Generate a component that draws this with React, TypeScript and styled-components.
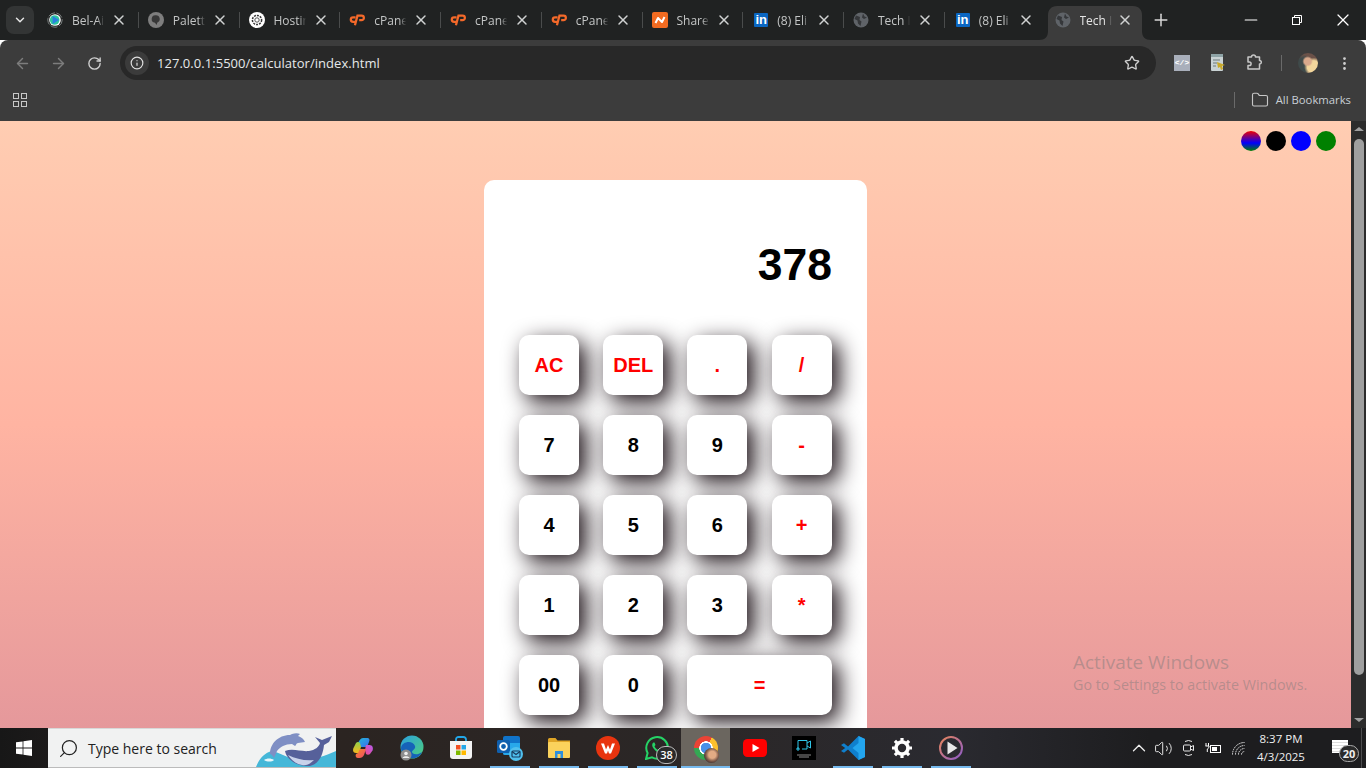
import styled, { createGlobalStyle } from "styled-components";
import {
  ArrowLeft,
  ArrowRight,
  ChevronDown,
  ChevronUp,
  EllipsisVertical,
  Folder,
  Info,
  Minus,
  Plus,
  RotateCw,
  Search,
  Star,
  Volume2,
  X,
} from "lucide-react";
import type { ReactNode } from "react";

const GlobalStyle = createGlobalStyle`
  html, body {
    margin: 0;
    height: 100%;
    overflow: hidden;
  }
  * { box-sizing: border-box; }
  #root { height: 100%; }
`;

const uiFont = `"Open Sans", "Noto Sans", sans-serif`;

function CpanelIcon() {
  return (
    <svg width="17" height="12" viewBox="0 0 17 12" fill="none" stroke="#f4692a" strokeWidth="2.4">
      <path d="M7 3.200H4.300a2.400 2.400 0 0 0 0 4.800H6.500" />
      <path d="M6.300 11.500 9 1.400h4.400a2.400 2.400 0 0 1 0 4.800h-2.600" />
    </svg>
  );
}

function LinkedinIcon() {
  return (
    <LinkedinBox>
      <span>in</span>
    </LinkedinBox>
  );
}

function GlobeIcon() {
  return (
    <svg width="16" height="16" viewBox="0 0 16 16">
      <circle cx="8" cy="8" r="7.500" fill="#5f6368" />
      <path d="M3 3.500 7 5 6.500 8 8.500 9.500 7.500 14 5 11.500 4.500 8.500 1.500 7ZM10 1.500l1.500 3L14 5.500 11 7 9 5.500Z" fill="#35373a" />
    </svg>
  );
}

function BelIcon() {
  return (
    <svg width="20" height="20" viewBox="0 0 20 20">
      <circle cx="10" cy="10" r="9" fill="none" stroke="#8f9595" strokeWidth="1" strokeDasharray="9 2" />
      <circle cx="10" cy="10" r="7.300" fill="#fff" />
      <circle cx="9.600" cy="10" r="6" fill="#2cc6a0" />
      <path d="M7 5 15 10l-8 5Z" fill="#2a7de1" />
    </svg>
  );
}

function PaletteIcon() {
  return (
    <svg width="16" height="16" viewBox="0 0 16 16">
      <circle cx="8" cy="8" r="8" fill="#7e7e7e" />
      <path d="M8 3.200a3.800 3.800 0 0 1 1.400 7.300L8.600 13 7 10.800A3.800 3.800 0 0 1 8 3.200Z" fill="#383838" />
    </svg>
  );
}

function HostingIcon() {
  return (
    <svg width="16" height="16" viewBox="0 0 16 16">
      <circle cx="8" cy="8" r="8" fill="#fff" />
      <circle cx="8" cy="8" r="4.600" fill="none" stroke="#333" strokeWidth="1.500" strokeDasharray="2 1" />
      <circle cx="8" cy="8" r="2.200" fill="none" stroke="#555" strokeWidth="1" />
    </svg>
  );
}

function ShareIcon() {
  return (
    <svg width="16" height="16" viewBox="0 0 16 16">
      <rect width="16" height="16" rx="2" fill="#f26b21" />
      <path d="M3.500 11 6 6l4 4 2.500-5" fill="none" stroke="#fff" strokeWidth="2" strokeLinejoin="round" />
    </svg>
  );
}

const tabs: { title: string; icon: ReactNode; active?: boolean; noDivider?: boolean }[] = [
  { title: "Bel-Ai", icon: <BelIcon /> },
  { title: "Palett", icon: <PaletteIcon /> },
  { title: "Hostin", icon: <HostingIcon /> },
  { title: "cPane", icon: <CpanelIcon /> },
  { title: "cPane", icon: <CpanelIcon /> },
  { title: "cPane", icon: <CpanelIcon /> },
  { title: "Share", icon: <ShareIcon /> },
  { title: "(8) Eli", icon: <LinkedinIcon /> },
  { title: "Tech I", icon: <GlobeIcon /> },
  { title: "(8) Eli", icon: <LinkedinIcon />, noDivider: true },
  { title: "Tech I", icon: <GlobeIcon />, active: true, noDivider: true },
];

const calcKeys: { label: string; accent?: boolean; wide?: boolean }[] = [
  { label: "AC", accent: true },
  { label: "DEL", accent: true },
  { label: ".", accent: true },
  { label: "/", accent: true },
  { label: "7" },
  { label: "8" },
  { label: "9" },
  { label: "-", accent: true },
  { label: "4" },
  { label: "5" },
  { label: "6" },
  { label: "+", accent: true },
  { label: "1" },
  { label: "2" },
  { label: "3" },
  { label: "*", accent: true },
  { label: "00" },
  { label: "0" },
  { label: "=", accent: true, wide: true },
];

const themeDots = [
  "linear-gradient(180deg, #f00000, #0000ff 60%, #008000)",
  "#000",
  "#0000ff",
  "#008000",
];

function WinLogo() {
  return (
    <svg width="16" height="16" viewBox="0 0 16 16" fill="#fff">
      <path d="M0 2.300 6.600 1.400v6.200H0ZM7.400 1.300 16 0v7.600H7.400ZM0 8.400h6.600v6.200L0 13.700ZM7.400 8.400H16V16l-8.600-1.300Z" />
    </svg>
  );
}

function SearchArt() {
  return (
    <svg width="80" height="38" viewBox="0 0 80 38">
      <path d="M0 38c3-8 8-14 16-16 8 2 14 6 22 8 14 3 28-2 42-8v16Z" fill="#45b7d8" />
      <path d="M14 25c0-10 8-19 20-19l2-1c3-1 6-1 8 0l-2 2c3 1 6 3 7 6l-7 1c-2 0-2 3-3 3l-3-2c-7 0-12 3-15 7l-3 7c-1-2-3-4-4-4Z" fill="#7f8fc4" />
      <path d="M29 22c8-3 16 1 24 0 6-1 10-4 11-8l-5-6 7 3 10-4-3 6-5 3c-1 10-5 19-14 21-11 1-23-5-25-15Z" fill="#56609a" />
      <path d="M32 26c8 4 17 6 26 5-4 4-8 6-12 5-6-1-11-5-14-10Z" fill="#c9d2ea" />
      <path d="M8 31c3-2 7-2 10 0-2 2-7 2-10 0Z" fill="#e8f6fa" />
    </svg>
  );
}

function CopilotIcon() {
  return (
    <svg width="22" height="22" viewBox="0 0 22 22">
      <defs>
        <linearGradient id="cpA" x1="0" y1="0" x2="1" y2="1">
          <stop offset="0" stopColor="#22b8d8" />
          <stop offset="1" stopColor="#3a6cf0" />
        </linearGradient>
        <linearGradient id="cpB" x1="1" y1="0" x2="0" y2="1">
          <stop offset="0" stopColor="#b45cf0" />
          <stop offset="1" stopColor="#f0488a" />
        </linearGradient>
        <linearGradient id="cpC" x1="0" y1="0" x2="0" y2="1">
          <stop offset="0" stopColor="#8fd04a" />
          <stop offset="1" stopColor="#f5b81e" />
        </linearGradient>
        <linearGradient id="cpD" x1="0" y1="0" x2="1" y2="1">
          <stop offset="0" stopColor="#f58a2a" />
          <stop offset="1" stopColor="#f0486a" />
        </linearGradient>
      </defs>
      <path d="M6 6.500C7 3 9 1 11.500 1H15c2.500 0 3 2 2 4l-2 5H8Z" fill="url(#cpA)" />
      <path d="M1.500 11 4 6c1-1.500 3-1.500 4 0l1 4-2 6H4c-3 0-3.500-3-2.500-5Z" fill="url(#cpC)" />
      <path d="M14 8h3.500c3 0 4 3 3 5.500L18 17c-1 1-3 1-4 0l-1-4Z" fill="url(#cpB)" />
      <path d="M8 12h6l-2 6c-1 2-2.500 3-4.500 3H6c-2 0-3-2-2-4l2-1Z" fill="url(#cpD)" />
    </svg>
  );
}

function EdgeIcon() {
  return (
    <svg width="26" height="26" viewBox="0 0 26 26">
      <defs>
        <linearGradient id="edgeG" x1="0" y1="0" x2="1" y2="1">
          <stop offset="0" stopColor="#2a9fe0" />
          <stop offset="1" stopColor="#4fd07a" />
        </linearGradient>
      </defs>
      <circle cx="13" cy="12" r="11.500" fill="url(#edgeG)" />
      <path d="M2 13c1-7 12-8 14-2 1 3-3 4-3 6s5 4 10 0c-2 5-7 7-11 6-5-1-10-5-10-10Z" fill="#1662b8" />
      <circle cx="7" cy="20" r="5.500" fill="#8d8d8d" />
      <circle cx="7" cy="18.500" r="1.800" fill="#eee" />
      <path d="M3.500 23c.5-2.500 6.500-2.500 7 0Z" fill="#eee" />
    </svg>
  );
}

function StoreIcon() {
  return (
    <svg width="24" height="24" viewBox="0 0 24 24">
      <path d="M7 6V3.500A2.500 2.500 0 0 1 9.500 1h5A2.500 2.500 0 0 1 17 3.500V6" fill="none" stroke="#22a7e8" strokeWidth="1.800" />
      <path d="M1 5h22v15a3 3 0 0 1-3 3H4a3 3 0 0 1-3-3Z" fill="#f4f4f4" />
      <rect x="7" y="9" width="4.500" height="4.500" fill="#f25022" />
      <rect x="12.500" y="9" width="4.500" height="4.500" fill="#22a7e8" />
      <rect x="7" y="14.500" width="4.500" height="4.500" fill="#7fba00" />
      <rect x="12.500" y="14.500" width="4.500" height="4.500" fill="#ffb900" />
    </svg>
  );
}

function OutlookIcon() {
  return (
    <svg width="26" height="26" viewBox="0 0 26 26">
      <rect x="6" y="1" width="17" height="19" rx="2" fill="#1073c9" />
      <path d="M6 8h17v12H8a2 2 0 0 1-2-2Z" fill="#28a8ea" />
      <rect x="0" y="5" width="13" height="13" rx="1.500" fill="#0f5fae" />
      <circle cx="6.500" cy="11.500" r="3.300" fill="none" stroke="#fff" strokeWidth="1.800" />
      <circle cx="19" cy="19" r="7" fill="#50c0ee" />
      <rect x="15" y="16" width="8" height="6" rx="1" fill="none" stroke="#173a5e" strokeWidth="1.200" />
      <path d="m15 16.500 4 3 4-3" fill="none" stroke="#173a5e" strokeWidth="1.200" />
    </svg>
  );
}

function ExplorerIcon() {
  return (
    <svg width="22" height="20" viewBox="0 0 22 20">
      <path d="M0 1.500A1.500 1.500 0 0 1 1.500 0h6l2 2.500H22V17H0Z" fill="#e0a526" />
      <rect x="0" y="4" width="22" height="16" rx="1" fill="#fbd25c" />
      <rect x="7" y="13" width="8" height="7" fill="#2e8fdc" />
      <rect x="9.500" y="16" width="3" height="4" fill="#fbd25c" />
    </svg>
  );
}

function WpsIcon() {
  return (
    <svg width="24" height="24" viewBox="0 0 24 24">
      <circle cx="12" cy="12" r="12" fill="#e8340f" />
      <path d="M5 7.500h3l2 6 2-4.500 2 4.500 2-6h3l-4 10h-2l-1-3-1 3H9Z" fill="#fff" />
    </svg>
  );
}

function WhatsappIcon() {
  return (
    <svg width="24" height="24" viewBox="0 0 24 24">
      <path d="M1 23l1.600-6A10.800 10.800 0 1 1 7 21.400Z" fill="none" stroke="#25d366" strokeWidth="2" />
      <path d="M8.500 6.500c-2 1.500-1.500 4 .5 6.500s5 4.500 7 3.500c1.500-.5 1.500-2 1-2.500l-2.500-1.200-1.200 1.200c-2-.8-3-2-3.800-3.800l1-1.200-1-2.500Z" fill="#25d366" />
    </svg>
  );
}

function YoutubeIcon() {
  return (
    <svg width="24" height="18" viewBox="0 0 24 18">
      <rect width="24" height="18" rx="4.500" fill="#f00" />
      <path d="M9.500 5v8l7-4Z" fill="#fff" />
    </svg>
  );
}

function RecorderIcon() {
  return (
    <svg width="24" height="24" viewBox="0 0 24 24">
      <rect width="24" height="24" fill="#000" />
      <path d="M6 13V4.500h9V13h-5M15 7l3.500-2v7l-3.500-2M4 13h4M6 11v4" fill="none" stroke="#2fc5e8" strokeWidth="1" />
      <path d="M5 19h14M7 21h10" stroke="#8a8a8a" strokeWidth="1" />
    </svg>
  );
}

function VscodeIcon() {
  return (
    <svg width="24" height="24" viewBox="0 0 24 24">
      <path d="M17.500 0 24 3v18l-6.500 3L7 13.500l-4 3.200L0 15l4.200-3L0 9l3-1.700 4 3.200Z" fill="#0f7fcd" />
      <path d="M17.500 0 24 3v18l-6.500 3V17l-6-5 6-5Z" fill="#23a5ee" />
    </svg>
  );
}

function GearIcon() {
  return (
    <svg width="20" height="20" viewBox="0 0 20 20">
      <circle cx="10" cy="10" r="6" fill="none" stroke="#fff" strokeWidth="3.600" />
      <path
        d="M10 0v4M10 16v4M0 10h4M16 10h4M2.900 2.900l2.800 2.800M14.300 14.300l2.800 2.800M2.900 17.100l2.800-2.800M14.300 5.700l2.800-2.800"
        stroke="#fff"
        strokeWidth="3.200"
      />
    </svg>
  );
}

function PlayerIcon() {
  return (
    <svg width="24" height="24" viewBox="0 0 24 24">
      <defs>
        <linearGradient id="playG" x1="0" y1="0" x2="1" y2="1">
          <stop offset="0" stopColor="#e8855a" />
          <stop offset="1" stopColor="#8c5bc9" />
        </linearGradient>
      </defs>
      <circle cx="12" cy="12" r="11" fill="none" stroke="url(#playG)" strokeWidth="2" />
      <path d="M8.500 5.500v13l10-6.500Z" fill="#e8e8e8" />
    </svg>
  );
}

function Restore() {
  return (
    <svg width="10" height="10" viewBox="0 0 10 10" fill="none" stroke="#fff">
      <rect x=".5" y="2.500" width="7" height="7" />
      <path d="M2.500 2.500v-2h7v7h-2" />
    </svg>
  );
}

function ExtensionCode() {
  return <CodeBadge>&lt;/&gt;</CodeBadge>;
}

function ExtensionNote() {
  return (
    <svg width="16" height="18" viewBox="0 0 16 18">
      <rect x="1" y="0" width="12" height="17" rx="1" fill="#c9d2d4" />
      <rect x="1" y="0" width="12" height="3" fill="#8ea3a6" />
      <path d="M3 6h7M3 9h4M3 12h3" stroke="#6d7b7d" />
      <path d="M7 8l8 3-3 1 1 3-2 1-1-3-2 1Z" fill="#c9a92a" />
    </svg>
  );
}

function PuzzleIcon() {
  return (
    <svg width="18" height="18" viewBox="0 0 18 18" fill="none" stroke="#c7c7c7" strokeWidth="1.500">
      <path d="M1.500 4H5a2 2 0 0 1 4 0h4v3.400a1.800 1.800 0 0 1 0 3.600V16H1.500v-3.500h1.300a1.800 1.800 0 0 0 0-3.600H1.500Z" transform="translate(1.500 -1)" strokeLinejoin="round" />
    </svg>
  );
}

function CameraTray() {
  return (
    <svg width="14" height="16" viewBox="0 0 14 16" fill="none" stroke="#e8e8e8">
      <path d="M3 1.500a7 7 0 0 1 7 0M3 14.500a7 7 0 0 0 7 0" />
      <rect x="1.500" y="5" width="7" height="6" rx="1" />
      <path d="m8.500 7 3-1.500v5l-3-1.500" />
    </svg>
  );
}

function BatteryTray() {
  return (
    <svg width="17" height="12" viewBox="0 0 17 12" fill="none" stroke="#fff">
      <rect x="5.500" y="3.500" width="10" height="7" />
      <rect x="7" y="5" width="5" height="4" fill="#fff" stroke="none" />
      <path d="M1 1v3M3.500 1v3M.5 4h3.500v1.500L2.300 7v3" />
    </svg>
  );
}

function WifiTray() {
  return (
    <svg width="14" height="13" viewBox="0 0 14 13" fill="none" stroke="#e8e8e8" strokeDasharray="1.500 .7">
      <path d="M.5 12.500A12 12 0 0 1 12.500.5M3.500 12.500a9 9 0 0 1 9-9M6.500 12.500a6 6 0 0 1 6-6M9.500 12.500a3 3 0 0 1 3-3" />
    </svg>
  );
}

export default function App() {
  return (
    <Screen>
      <GlobalStyle />
      <TabStrip>
        <TabMenu>
          <ChevronDown size={14} strokeWidth={2.5} />
        </TabMenu>
        <TabList>
          {tabs.map((tab, index) => (
            <Tab key={index} $noDivider={tab.noDivider}>
              {tab.active && (
                <ActiveShape width="112" height="34" viewBox="0 0 112 34">
                  <path d="M0 34c6 0 9-3 9-9V9c0-5 3-9 9-9h76c6 0 9 4 9 9v16c0 6 3 9 9 9Z" fill="#3c3c3c" />
                </ActiveShape>
              )}
              <Favicon>{tab.icon}</Favicon>
              <TabTitle $active={tab.active}>{tab.title}</TabTitle>
              <TabClose $active={tab.active}>
                <X size={16} strokeWidth={2.2} />
              </TabClose>
            </Tab>
          ))}
        </TabList>
        <NewTab>
          <Plus size={20} strokeWidth={1.8} />
        </NewTab>
        <WindowControls>
          <WindowButton>
            <Minus size={20} strokeWidth={1.3} />
          </WindowButton>
          <WindowButton>
            <Restore />
          </WindowButton>
          <WindowButton>
            <X size={20} strokeWidth={1.5} />
          </WindowButton>
        </WindowControls>
      </TabStrip>

      <Toolbar>
        <NavButton $dim>
          <ArrowLeft size={17} />
        </NavButton>
        <NavButton $dim>
          <ArrowRight size={17} />
        </NavButton>
        <NavButton>
          <RotateCw size={15} strokeWidth={2.2} />
        </NavButton>
        <Omnibox>
          <SiteInfo>
            <Info size={14} />
          </SiteInfo>
          <Url>127.0.0.1:5500/calculator/index.html</Url>
          <StarButton>
            <Star size={16} />
          </StarButton>
        </Omnibox>
        <ToolIcons>
          <ToolIcon>
            <ExtensionCode />
          </ToolIcon>
          <ToolIcon>
            <ExtensionNote />
          </ToolIcon>
          <ToolIcon>
            <PuzzleIcon />
          </ToolIcon>
          <ToolDivider />
          <Avatar />
          <ToolIcon>
            <EllipsisVertical size={17} color="#d0d0d0" />
          </ToolIcon>
        </ToolIcons>
      </Toolbar>

      <BookmarksBar>
        <AppsGrid>
          <i />
          <i />
          <i />
          <i />
        </AppsGrid>
        <BookmarkDivider />
        <Folder size={18} color="#c7c7c7" strokeWidth={1.5} />
        <BookmarkText>All Bookmarks</BookmarkText>
      </BookmarksBar>

      <Viewport>
        <Page>
          <ThemeRow>
            {themeDots.map((dot) => (
              <ThemeDot key={dot} $fill={dot} />
            ))}
          </ThemeRow>
          <Calculator>
            <Display>378</Display>
            <Keys>
              {calcKeys.map((key) => (
                <Key key={key.label} $accent={key.accent} $wide={key.wide}>
                  {key.label}
                </Key>
              ))}
            </Keys>
          </Calculator>
          <Watermark>
            <strong>Activate Windows</strong>
            <span>Go to Settings to activate Windows.</span>
          </Watermark>
        </Page>
        <Scrollbar>
          <ChevronUpMark />
          <Thumb />
          <ChevronDownMark />
        </Scrollbar>
      </Viewport>

      <Taskbar>
        <StartButton>
          <WinLogo />
        </StartButton>
        <SearchBox>
          <SearchGlyph>
            <Search size={21} strokeWidth={1.4} color="#222" />
          </SearchGlyph>
          <SearchText>Type here to search</SearchText>
          <SearchArtSlot>
            <SearchArt />
          </SearchArtSlot>
        </SearchBox>
        <TaskItems>
          <TaskItem><CopilotIcon /></TaskItem>
          <TaskItem><EdgeIcon /></TaskItem>
          <TaskItem><StoreIcon /></TaskItem>
          <TaskItem $open><OutlookIcon /></TaskItem>
          <TaskItem $open><ExplorerIcon /></TaskItem>
          <TaskItem $open><WpsIcon /></TaskItem>
          <TaskItem $open>
            <WhatsappIcon />
            <CountBadge>38</CountBadge>
          </TaskItem>
          <TaskItem $open $active>
            <ChromeLogo />
            <ChromeProfile />
          </TaskItem>
          <TaskItem><YoutubeIcon /></TaskItem>
          <TaskItem><RecorderIcon /></TaskItem>
          <TaskItem $open><VscodeIcon /></TaskItem>
          <TaskItem $open><GearIcon /></TaskItem>
          <TaskItem $open><PlayerIcon /></TaskItem>
        </TaskItems>
        <Tray>
          <TrayIcon><ChevronUp size={22} strokeWidth={1.4} color="#eee" /></TrayIcon>
          <TrayIcon><Volume2 size={19} strokeWidth={1.2} color="#eee" /></TrayIcon>
          <TrayIcon><CameraTray /></TrayIcon>
          <TrayIcon><BatteryTray /></TrayIcon>
          <TrayIcon><WifiTray /></TrayIcon>
          <Clock>
            <span>8:37 PM</span>
            <span>4/3/2025</span>
          </Clock>
          <Notifications>
            <NoteGlyph />
            <NoteCount>20</NoteCount>
          </Notifications>
          <ShowDesktop />
        </Tray>
      </Taskbar>
    </Screen>
  );
}

const Screen = styled.div`
  width: 1366px;
  height: 768px;
  display: flex;
  flex-direction: column;
  overflow: hidden;
  font-family: ${uiFont};
`;

const TabStrip = styled.div`
  height: 40px;
  flex: none;
  display: flex;
  background: #202222;
`;

const TabMenu = styled.div`
  width: 28px;
  height: 28px;
  margin: 6px 4px 0 6px;
  flex: none;
  display: grid;
  place-items: center;
  border-radius: 8px;
  background: #333535;
  color: #e6e6e6;
`;

const TabList = styled.div`
  display: flex;
`;

const Tab = styled.div<{ $noDivider?: boolean }>`
  position: relative;
  width: 100.75px;
  display: flex;
  align-items: center;
  flex: none;

  &::after {
    content: "";
    display: ${({ $noDivider }) => ($noDivider ? "none" : "block")};
    position: absolute;
    right: 0;
    top: 12px;
    width: 1px;
    height: 16px;
    background: #4a4c4c;
  }
`;

const ActiveShape = styled.svg`
  position: absolute;
  left: -7px;
  top: 6px;
`;

const Favicon = styled.div`
  position: relative;
  width: 34px;
  padding: 0 9px;
  height: 20px;
  flex: none;
  display: flex;
  align-items: center;
  justify-content: center;
`;

const LinkedinBox = styled.div`
  width: 14px;
  height: 14px;
  margin-left: 2px;
  flex: none;
  display: grid;
  place-items: center;
  background: #0a66c2;
  border-radius: 1px;

  span {
    font: 700 13px/14px "Liberation Sans", sans-serif;
    color: #fff;
  }
`;

const TabTitle = styled.div<{ $active?: boolean }>`
  position: relative;
  width: 35px;
  padding-top: 1px;
  font-size: 12px;
  line-height: 16px;
  white-space: nowrap;
  overflow: hidden;
  color: ${({ $active }) => ($active ? "#e4e4e4" : "#c4c6c6")};
  mask-image: linear-gradient(90deg, #000 72%, transparent 92%);
`;

const TabClose = styled.div<{ $active?: boolean }>`
  position: relative;
  width: 26px;
  margin-left: ${({ $active }) => ($active ? "-3px" : "-1px")};
  display: grid;
  place-items: center;
  color: #d0d2d2;
`;

const NewTab = styled.div`
  width: 30px;
  display: flex;
  align-items: center;
  justify-content: center;
  color: #d8d8d8;
`;

const WindowControls = styled.div`
  margin-left: auto;
  display: flex;
`;

const WindowButton = styled.div`
  width: 46px;
  height: 40px;
  display: grid;
  place-items: center;
  color: #fff;
`;

const Toolbar = styled.div`
  height: 41px;
  flex: none;
  display: flex;
  align-items: flex-start;
  padding: 6px 0 0 4px;
  background: #3c3c3c;
  border-radius: 8px 8px 0 0;
`;

const NavButton = styled.div<{ $dim?: boolean }>`
  width: 36px;
  height: 34px;
  flex: none;
  display: grid;
  place-items: center;
  color: ${({ $dim }) => ($dim ? "#7d7d7d" : "#d0d0d0")};
`;

const Omnibox = styled.div`
  width: 1036px;
  height: 34px;
  margin-left: 8px;
  flex: none;
  display: flex;
  align-items: center;
  padding: 0 4px 0 5px;
  border-radius: 17px;
  background: #282828;
`;

const SiteInfo = styled.div`
  width: 24px;
  height: 24px;
  flex: none;
  display: grid;
  place-items: center;
  border-radius: 50%;
  background: #3b3b3b;
  color: #e0e0e0;
`;

const Url = styled.div`
  margin-left: 8px;
  font-size: 13px;
  color: #e6e8ea;
  letter-spacing: 0.04px;
`;

const StarButton = styled.div`
  margin-left: auto;
  width: 28px;
  margin-right: 6px;
  display: grid;
  place-items: center;
  color: #d0d0d0;
`;

const ToolIcons = styled.div`
  height: 34px;
  display: flex;
  align-items: center;
  margin-left: 8px;
`;

const ToolIcon = styled.div`
  width: 36px;
  height: 34px;
  display: grid;
  place-items: center;
`;

const CodeBadge = styled.div`
  width: 16px;
  height: 16px;
  background: #a9afbb;
  color: #fff;
  font: 700 8px/16px "Liberation Mono", monospace;
  text-align: center;
`;

const ToolDivider = styled.div`
  width: 1px;
  height: 16px;
  margin: 0 16px 0 9px;
  background: #6a6a6a;
`;

const Avatar = styled.div`
  width: 20px;
  height: 20px;
  margin-right: 8px;
  border-radius: 50%;
  background:
    radial-gradient(circle at 48% 42%, #d9a98c 0 22%, transparent 34%),
    radial-gradient(circle at 78% 70%, #f3d69c 0 30%, transparent 45%),
    radial-gradient(circle at 25% 60%, #3f4a4a 0 35%, transparent 55%),
    #6b5148;
`;

const BookmarksBar = styled.div`
  height: 40px;
  flex: none;
  display: flex;
  align-items: center;
  padding: 0 15px 2px 13px;
  background: #3c3c3c;
`;

const AppsGrid = styled.div`
  display: grid;
  grid-template-columns: 6px 6px;
  gap: 2px;

  i {
    width: 6px;
    height: 6px;
    border: 1.5px solid #c7c7c7;
  }
`;

const BookmarkDivider = styled.div`
  width: 1px;
  height: 16px;
  margin-left: auto;
  margin-right: 16px;
  background: #6a6a6a;
`;

const BookmarkText = styled.div`
  margin: 0 0 2px 7px;
  font-size: 11.3px;
  color: #c9d0d6;
`;

const Viewport = styled.div`
  flex: 1;
  min-height: 0;
  display: flex;
`;

const Page = styled.div`
  position: relative;
  flex: 1;
  min-width: 0;
  overflow: hidden;
  padding-top: 10px;
  background: linear-gradient(180deg, #ffcdb2 0%, #ffb4a2 50%, #e5989b 100%);
`;

const ThemeRow = styled.div`
  display: flex;
  justify-content: flex-end;
  gap: 5px;
  padding-right: 15px;
`;

const ThemeDot = styled.div<{ $fill: string }>`
  width: 20px;
  height: 20px;
  border-radius: 50%;
  background: ${({ $fill }) => $fill};
`;

const Calculator = styled.div`
  width: 383px;
  margin: 29px auto 0;
  padding: 35px;
  background: #fff;
  border-radius: 10px;
`;

const Display = styled.div`
  height: 100px;
  margin-bottom: 20px;
  font: 700 44.5px/100px "Liberation Sans", Arial, sans-serif;
  color: #000;
  text-align: right;
`;

const Keys = styled.div`
  display: grid;
  grid-template-columns: repeat(4, 60px);
  grid-auto-rows: 60px;
  column-gap: 24.2px;
  row-gap: 20px;
`;

const Key = styled.div<{ $accent?: boolean; $wide?: boolean }>`
  grid-column: ${({ $wide }) => ($wide ? "span 2" : "auto")};
  display: grid;
  place-items: center;
  border-radius: 10px;
  background: #fff;
  box-shadow: 7px 7px 22px #1a0f15;
  font: 700 20px "Liberation Sans", Arial, sans-serif;
  color: ${({ $accent }) => ($accent ? "#f00" : "#000")};
`;

const Watermark = styled.div`
  position: absolute;
  left: 1073px;
  top: 529px;
  display: flex;
  flex-direction: column;
  color: rgba(120, 120, 120, 0.45);

  strong {
    font-size: 19px;
    line-height: 24px;
    font-weight: 400;
  }

  span {
    font-size: 14.3px;
    line-height: 22px;
  }
`;

const Scrollbar = styled.div`
  width: 15px;
  flex: none;
  display: flex;
  flex-direction: column;
  align-items: center;
  background: #2c2c2c;
`;

const ChevronUpMark = styled.div`
  margin-top: 6px;
  width: 0;
  height: 0;
  border: 5px solid transparent;
  border-top: 0;
  border-bottom: 4px solid #9f9f9f;
`;

const Thumb = styled.div`
  width: 10px;
  height: 536px;
  margin-top: 8px;
  border-radius: 5px;
  background: #9f9f9f;
`;

const ChevronDownMark = styled.div`
  margin-top: auto;
  margin-bottom: 6px;
  width: 0;
  height: 0;
  border: 5px solid transparent;
  border-bottom: 0;
  border-top: 4px solid #9f9f9f;
`;

const Taskbar = styled.div`
  height: 40px;
  flex: none;
  display: flex;
  background: linear-gradient(90deg, #171717 0, #1c1a1a 48px, #2b2421 340px, #2b2727 700px, #2a2a30 950px, #1d1d1f 1150px);
`;

const StartButton = styled.div`
  width: 48px;
  flex: none;
  display: grid;
  place-items: center;
`;

const SearchBox = styled.div`
  position: relative;
  width: 288px;
  flex: none;
  display: flex;
  align-items: center;
  padding-left: 10px;
  background: #f1f2f2;
  border-top: 1px solid #d8d8d8;
  border-bottom: 1px solid #bbb;
`;

const SearchGlyph = styled.div`
  display: flex;
  transform: scaleX(-1);
`;

const SearchText = styled.div`
  margin-left: 9px;
  font-size: 14px;
  color: #222;
`;

const SearchArtSlot = styled.div`
  margin-left: auto;
  height: 38px;
  display: flex;
`;

const TaskItems = styled.div`
  display: flex;
  margin-left: 2px;
`;

const TaskItem = styled.div<{ $open?: boolean; $active?: boolean }>`
  position: relative;
  width: 49px;
  display: grid;
  place-items: center;
  background: ${({ $active }) => ($active ? "#6b665f" : "transparent")};

  &::after {
    content: "";
    display: ${({ $open }) => ($open ? "block" : "none")};
    position: absolute;
    bottom: 0;
    left: ${({ $active }) => ($active ? "0" : "5px")};
    right: ${({ $active }) => ($active ? "0" : "4px")};
    height: 2px;
    background: #76b9ed;
  }
`;

const CountBadge = styled.div`
  position: absolute;
  right: 4px;
  top: 18px;
  width: 21px;
  height: 18px;
  border: 1px solid #bbb;
  border-radius: 9px;
  background: #2a2a2a;
  font-size: 11px;
  font-weight: 600;
  line-height: 15px;
  text-align: center;
  color: #fff;
`;

const ChromeLogo = styled.div`
  width: 24px;
  height: 24px;
  border-radius: 50%;
  background:
    radial-gradient(circle, #4a90e8 0 5px, #fff 5.500px 6.500px, transparent 7px),
    conic-gradient(from 30deg, #fbc02d 0 120deg, #34a853 120deg 240deg, #ea4335 240deg 360deg);
`;

const ChromeProfile = styled.div`
  position: absolute;
  right: 11px;
  bottom: 5px;
  width: 15px;
  height: 15px;
  border-radius: 50%;
  background: radial-gradient(circle at 55% 45%, #e2ab84 0 30%, #7d5a4a 55%, #30262a 80%);
`;

const Tray = styled.div`
  margin-left: auto;
  display: flex;
  align-items: center;
  padding-right: 4px;
`;

const TrayIcon = styled.div`
  width: 25px;
  height: 40px;
  display: grid;
  place-items: center;
`;

const Clock = styled.div`
  width: 72px;
  margin-left: -6px;
  display: flex;
  flex-direction: column;
  align-items: center;
  font-size: 11.5px;
  line-height: 18px;
  color: #f0f0f0;
`;

const Notifications = styled.div`
  position: relative;
  width: 44px;
  height: 40px;
`;

const NoteGlyph = styled.div`
  position: absolute;
  left: 15px;
  top: 12px;
  width: 16px;
  height: 13px;
  background: repeating-linear-gradient(#fff 0 2px, #ddd 2px 3px);
`;

const NoteCount = styled.div`
  position: absolute;
  left: 22px;
  top: 17px;
  width: 20px;
  height: 17px;
  border: 1px solid #aaa;
  border-radius: 9px;
  background: #2a2a2a;
  font-size: 11px;
  font-weight: 700;
  line-height: 15px;
  text-align: center;
  color: #eee;
`;

const ShowDesktop = styled.div`
  width: 1px;
  height: 40px;
  background: #4c4c4e;
`;
